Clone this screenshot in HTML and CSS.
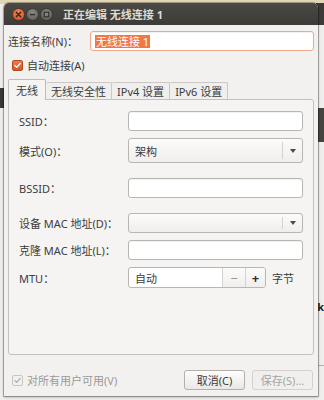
FILE: index.html
```html
<!DOCTYPE html>
<html lang="zh-CN">
<head>
<meta charset="utf-8">
<title>正在编辑 无线连接 1</title>
<link rel="stylesheet" href="styles.css">
</head>
<body>
<div class="desktop">
  <div class="bg-top"></div>
  <div class="bg-left-dark"></div>
  <div class="bg-right-title"></div>
  <div class="bg-right-dark"></div>
  <div class="bg-right-line"></div>
  <span class="bg-k">k</span>

  <div class="window">
    <div class="titlebar">
      <div class="wbuttons">
        <svg class="wbtn" width="13" height="13" viewBox="0 0 13 13"><defs><radialGradient id="gc" cx="50%" cy="35%" r="65%"><stop offset="0" stop-color="#f58b5a"/><stop offset="1" stop-color="#d9511f"/></radialGradient></defs><circle cx="6.5" cy="6.5" r="6" fill="url(#gc)" stroke="#2a2925" stroke-width="0.6"/><path d="M4.4 4.4 L8.6 8.6 M8.6 4.4 L4.4 8.6" stroke="#3a2a22" stroke-width="1.5" stroke-linecap="round"/></svg>
        <svg class="wbtn" width="13" height="13" viewBox="0 0 13 13"><defs><radialGradient id="gm" cx="50%" cy="35%" r="65%"><stop offset="0" stop-color="#8d8b85"/><stop offset="1" stop-color="#5f5e5a"/></radialGradient></defs><circle cx="6.5" cy="6.5" r="6" fill="url(#gm)" stroke="#2a2925" stroke-width="0.6"/><path d="M4 6.6 L9 6.6" stroke="#33322e" stroke-width="1.5"/></svg>
        <svg class="wbtn" width="13" height="13" viewBox="0 0 13 13"><circle cx="6.5" cy="6.5" r="6" fill="url(#gm)" stroke="#2a2925" stroke-width="0.6"/><rect x="4.2" y="4.2" width="4.6" height="4.6" fill="none" stroke="#33322e" stroke-width="1.2"/></svg>
      </div>
      <div class="title">正在编辑 无线连接 1</div>
    </div>

    <div class="content">
      <div class="name-row">
        <label class="name-label">连接名称(N)：</label>
        <div class="entry focus"><span class="sel">无线连接 1</span></div>
      </div>

      <div class="check-row">
        <span class="check on"><svg width="11" height="11" viewBox="0 0 11 11"><path d="M2.3 5.6 L4.5 7.8 L8.8 3" fill="none" stroke="#fff" stroke-width="1.7" stroke-linecap="round" stroke-linejoin="round"/></svg></span>
        <span class="check-text">自动连接(A)</span>
      </div>

      <div class="notebook">
        <div class="tabs">
          <div class="tab active">无线</div>
          <div class="tab">无线安全性</div>
          <div class="tab">IPv4 设置</div>
          <div class="tab">IPv6 设置</div>
        </div>
        <div class="panel">
          <div class="form">
            <div class="row">
              <span class="lbl">SSID：</span>
              <div class="entry"></div>
            </div>
            <div class="row gap-sm">
              <span class="lbl">模式(O)：</span>
              <div class="combo tall"><span class="ctext">架构</span><span class="csep"></span><span class="carrow"></span></div>
            </div>
            <div class="row gap-lg">
              <span class="lbl">BSSID：</span>
              <div class="entry"></div>
            </div>
            <div class="row gap-lg">
              <span class="lbl">设备 MAC 地址(D)：</span>
              <div class="combo"><span class="ctext"></span><span class="csep"></span><span class="carrow"></span></div>
            </div>
            <div class="row gap-sm">
              <span class="lbl">克隆 MAC 地址(L)：</span>
              <div class="entry"></div>
            </div>
            <div class="row gap-sm">
              <span class="lbl">MTU：</span>
              <div class="spin-wrap">
                <div class="spin">
                  <span class="stext">自动</span>
                  <span class="sbtn minus">−</span>
                  <span class="sbtn plus">+</span>
                </div>
                <span class="unit">字节</span>
              </div>
            </div>
          </div>
        </div>
      </div>

      <div class="footer">
        <div class="foot-check">
          <span class="check disabled"><svg width="11" height="11" viewBox="0 0 11 11"><path d="M2.3 5.6 L4.5 7.8 L8.8 3" fill="none" stroke="#a9a7a3" stroke-width="1.4" stroke-linecap="round" stroke-linejoin="round"/></svg></span>
          <span class="check-text dim">对所有用户可用(V)</span>
        </div>
        <div class="buttons">
          <button class="btn">取消(C)</button>
          <button class="btn dis">保存(S)...</button>
        </div>
      </div>
    </div>
  </div>
</div>
</body>
</html>
```

FILE: styles.css
```css
* { box-sizing: border-box; }
html, body { margin: 0; padding: 0; }
body {
  width: 324px;
  height: 400px;
  overflow: hidden;
  font-family: "Noto Sans", "Noto Sans CJK SC", sans-serif;
  font-size: 11px;
  color: #3c3c3c;
}
.desktop {
  position: relative;
  width: 324px;
  height: 400px;
  background: #efeeec;
  overflow: hidden;
}
.bg-top { position: absolute; left: 0; top: 0; width: 324px; height: 4px; background: #e3d6b6; }
.bg-left-dark { position: absolute; left: 0; top: 88px; width: 6px; height: 20px; background: #3a3935; }
.bg-right-title { position: absolute; right: 0; top: 3px; width: 8px; height: 22px; background: #3c3b37; }
.bg-right-dark { position: absolute; right: 0; top: 108px; width: 8px; height: 34px; background: #45443f; }
.bg-right-line { position: absolute; right: 0; top: 365px; width: 8px; height: 1px; background: #b5b3ae; }
.bg-k { position: absolute; right: 0; top: 299px; font-size: 11px; font-weight: bold; color: #222; }

.window {
  position: absolute;
  left: 4px;
  top: 3px;
  width: 314px;
  height: 393px;
  background: #f2f1f0;
  border-radius: 5px 5px 0 0;
  box-shadow: 0 0 0 1px rgba(0,0,0,0.25), 0 1px 3px rgba(0,0,0,0.35);
  display: flex;
  flex-direction: column;
}
.titlebar {
  height: 22px;
  background: linear-gradient(#4a4944, #3c3b37);
  border-radius: 5px 5px 0 0;
  display: flex;
  align-items: center;
  padding-left: 8px;
  flex: none;
}
.wbuttons { display: flex; gap: 1px; align-items: center; margin-top: 1px; }
.wbtn { display: block; }
.title {
  margin-left: 10px;
  color: #dfdbd2;
  font-weight: bold;
  font-size: 11px;
}

.content {
  flex: 1;
  display: flex;
  flex-direction: column;
  padding: 6px 4px 0 4px;
}
.name-row { display: flex; align-items: center; height: 20px; }
.name-label { width: 82px; flex: none; }
.entry {
  flex: 1;
  height: 20px;
  background: #fff;
  border: 1px solid #b9b6b1;
  border-radius: 3px;
  box-shadow: inset 0 1px 1px rgba(0,0,0,0.06);
  display: flex;
  align-items: center;
  padding-left: 4px;
}
.entry.focus { border-color: #f0a888; }
.sel {
  background: #f07746;
  color: #fff;
  line-height: 13px;
  padding: 0 1px;
}

.check-row { display: flex; align-items: center; height: 16px; margin-top: 6px; padding-left: 4px; }
.check {
  width: 11px;
  height: 11px;
  border-radius: 2px;
  display: flex;
  align-items: center;
  justify-content: center;
  flex: none;
}
.check.on { background: linear-gradient(#ee7a4a, #d9562a); border: 1px solid #b54a22; }
.check.disabled { background: #f2f1f0; border: 1px solid #c8c6c2; }
.check svg { display: block; }
.check-text { margin-left: 4px; }
.check-text.dim { color: #9b9995; }

.notebook { margin-top: 6px; display: flex; flex-direction: column; }
.tabs { display: flex; align-items: flex-end; height: 20px; position: relative; z-index: 1; }
.tab {
  height: 17px;
  padding: 0 5px;
  border: 1px solid #cbc8c3;
  border-bottom: none;
  border-left: none;
  background: #f0efed;
  display: flex;
  align-items: center;
  border-radius: 2px 2px 0 0;
}
.tab.active {
  height: 21px;
  margin-bottom: -1px;
  background: #f5f4f3;
  border-left: 1px solid #bfbcb7;
  border-color: #bfbcb7;
  padding: 0 7px;
}
.panel {
  height: 256px;
  background: #f5f4f3;
  border: 1px solid #c4c1bc;
  border-radius: 0 3px 3px 3px;
  padding: 11px 10px 0 10px;
}
.form { display: flex; flex-direction: column; }
.row { display: flex; align-items: center; }
.gap-sm { margin-top: 7px; }
.gap-lg { margin-top: 15px; }
.lbl { width: 109px; flex: none; }
.combo {
  flex: 1;
  height: 20px;
  border: 1px solid #b9b6b1;
  border-radius: 3px;
  background: linear-gradient(#fbfbfa, #efeeec);
  display: flex;
  align-items: center;
}
.combo.tall { height: 25px; }
.ctext { flex: 1; padding-left: 6px; }
.csep { width: 1px; align-self: stretch; margin: 3px 0; background: #d6d3ce; }
.carrow {
  width: 19px;
  display: flex;
  justify-content: center;
}
.carrow::before {
  content: "";
  border-left: 3px solid transparent;
  border-right: 3px solid transparent;
  border-top: 4px solid #4a4a48;
}
.spin-wrap { display: flex; align-items: center; }
.spin {
  width: 138px;
  height: 21px;
  display: flex;
  border: 1px solid #b9b6b1;
  border-radius: 3px;
  background: #fff;
  overflow: hidden;
}
.stext { flex: 1; display: flex; align-items: center; padding-left: 6px; }
.sbtn {
  display: flex;
  align-items: center;
  justify-content: center;
  border-left: 1px solid #d6d3ce;
  background: linear-gradient(#fbfbfa, #f0efed);
  font-size: 13px;
}
.minus { width: 23px; color: #9b9995; }
.plus { width: 20px; color: #2e2e2e; font-weight: bold; }
.unit { margin-left: 6px; }

.footer {
  margin-top: 15px;
  display: flex;
  align-items: center;
  justify-content: space-between;
  height: 20px;
  padding-right: 1px;
}
.foot-check { display: flex; align-items: center; padding-left: 4px; }
.buttons { display: flex; gap: 7px; }
.btn {
  width: 61px;
  height: 20px;
  font-family: inherit;
  font-size: 11px;
  color: #3c3c3c;
  border: 1px solid #b3b0ab;
  border-radius: 3px;
  background: linear-gradient(#fdfdfc, #e9e8e6);
  padding: 0;
}
.btn.dis { color: #a6a4a0; border-color: #d3d1cd; background: #f0efed; }
```
